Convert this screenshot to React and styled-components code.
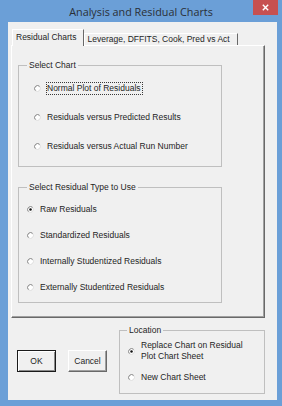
import React from "react";
import styled, { createGlobalStyle } from "styled-components";

const Global = createGlobalStyle`
  html, body { margin: 0; padding: 0; background: #6b9fd7; }
  body { font-family: "Liberation Sans", Arial, sans-serif; }
`;

const Window = styled.div`
  width: 282px;
  height: 406px;
  box-sizing: border-box;
  background: #6b9fd7;
  display: flex;
  flex-direction: column;
`;

const TitleBar = styled.div`
  flex: none;
  height: 22px;
  padding: 0 4px;
  display: grid;
  grid-template-columns: 1fr auto 1fr;
`;

const Title = styled.div`
  grid-column: 2;
  line-height: 23px;
  font-family: "Open Sans", "Noto Sans", sans-serif;
  font-size: 10.8px;
  color: #2a2f36;
  white-space: nowrap;
`;

const CloseButton = styled.div`
  grid-column: 3;
  justify-self: end;
  align-self: start;
  width: 25px;
  height: 15px;
  background: #c75050;
  display: flex;
  align-items: center;
  justify-content: center;
`;

const Client = styled.div`
  flex: 1;
  margin: 0 5px 6px 8px;
  padding: 7px 12px 0 3px;
  background: #f0f0f0;
  display: flex;
  flex-direction: column;
  font-family: "Liberation Sans", Arial, sans-serif;
  font-size: 8.5px;
  color: #1e1e1e;
`;

const TabStrip = styled.div`
  display: flex;
  align-items: flex-end;
  padding-left: 1px;
  position: relative;
  z-index: 1;
`;

const Tab = styled.div`
  box-sizing: border-box;
  height: ${(p) => (p.$active ? 17 : 12)}px;
  margin-bottom: ${(p) => (p.$active ? -1 : 0)}px;
  padding: 0 7px ${(p) => (p.$active ? 1 : 0)}px ${(p) => (p.$active ? 3 : 2)}px;
  display: flex;
  align-items: center;
  line-height: 11px;
  white-space: nowrap;
  background: #f0f0f0;
  border-top: 1px solid #ffffff;
  border-left: 1px solid #ffffff;
  border-right: 1px solid #696969;
`;

const TabPanel = styled.div`
  box-sizing: border-box;
  height: 273px;
  border: 1px solid;
  border-color: #ffffff #696969 #696969 #ffffff;
  box-shadow: inset -1px -1px 0 #a0a0a0;
  padding: 14px 0 0 6px;
  display: flex;
  flex-direction: column;
  gap: 15px;
`;

const GroupBox = styled.fieldset`
  margin: 0;
  padding: 0;
  min-width: 0;
  box-sizing: border-box;
  border: 1px solid #bfbfbf;
  width: ${(p) => p.$width || "auto"};
  flex: ${(p) => (p.$grow ? 1 : "none")};
`;

const Legend = styled.legend`
  padding: 0 2px;
  margin-left: ${(p) => p.$offset}px;
  line-height: 10px;
`;

const Options = styled.div`
  display: flex;
  flex-direction: column;
  padding: ${(p) => p.$pad};
  gap: ${(p) => p.$gap}px;
`;

const Option = styled.label`
  display: flex;
  align-items: center;
  gap: 5px;
`;

const OptionText = styled.span`
  line-height: 11px;
  padding: 1px 2px 1px 1px;
  max-width: ${(p) => p.$maxWidth || "none"};
  outline: ${(p) => (p.$focused ? "1px dotted #3a3a3a" : "none")};
  outline-offset: -1px;
`;

const BottomRow = styled.div`
  display: flex;
  align-items: flex-start;
  padding: 7px 0 0 6px;
  gap: 12px;
`;

const Buttons = styled.div`
  display: flex;
  gap: 12px;
  margin-top: 25px;
`;

const Button = styled.button`
  width: 39px;
  height: 22px;
  box-sizing: border-box;
  padding: 0;
  font: inherit;
  color: inherit;
  background: #f0f0f0;
  border: 1px solid;
  border-color: ${(p) =>
    p.$default ? "#1a1a1a" : "#ffffff #696969 #696969 #ffffff"};
  box-shadow: ${(p) =>
    p.$default
      ? "inset 1px 1px 0 #ffffff, inset -1px -1px 0 #8a8a8a"
      : "inset -1px -1px 0 #a0a0a0"};
`;

const RadioMark = ({ checked }) => (
  <svg width="7" height="7" viewBox="0 0 7 7" style={{ flex: "none" }}>
    <circle cx="3.5" cy="3.5" r="3" fill="#ffffff" />
    <path d="M5.62 1.38 A3 3 0 0 1 1.38 5.62" fill="none" stroke="#dcdcdc" strokeWidth="1" />
    <path d="M1.38 5.62 A3 3 0 0 1 5.62 1.38" fill="none" stroke="#7c7c7c" strokeWidth="1" />
    {checked && <circle cx="3.5" cy="3.5" r="1.25" fill="#111111" />}
  </svg>
);

const Radio = ({ checked, focused, maxWidth, children }) => (
  <Option>
    <RadioMark checked={checked} />
    <OptionText $focused={focused} $maxWidth={maxWidth}>
      {children}
    </OptionText>
  </Option>
);

export default function App() {
  return (
    <>
      <Global />
      <Window>
        <TitleBar>
          <Title>Analysis and Residual Charts</Title>
          <CloseButton>
            <svg width="7" height="7" viewBox="0 0 7 7">
              <path d="M0.8 0.8 L6.2 6.2 M6.2 0.8 L0.8 6.2" stroke="#ffffff" strokeWidth="1.4" />
            </svg>
          </CloseButton>
        </TitleBar>
        <Client>
          <TabStrip>
            <Tab $active>Residual Charts</Tab>
            <Tab>Leverage, DFFITS, Cook, Pred vs Act</Tab>
          </TabStrip>
          <TabPanel>
            <GroupBox $width="204px">
              <Legend $offset={8}>Select Chart</Legend>
              <Options $pad="12px 0 13px 15px" $gap={16}>
                <Radio focused>Normal Plot of Residuals</Radio>
                <Radio>Residuals versus Predicted Results</Radio>
                <Radio>Residuals versus Actual Run Number</Radio>
              </Options>
            </GroupBox>
            <GroupBox $width="204px">
              <Legend $offset={8}>Select Residual Type to Use</Legend>
              <Options $pad="11px 0 8px 8px" $gap={13}>
                <Radio checked>Raw Residuals</Radio>
                <Radio>Standardized Residuals</Radio>
                <Radio>Internally Studentized Residuals</Radio>
                <Radio>Externally Studentized Residuals</Radio>
              </Options>
            </GroupBox>
          </TabPanel>
          <BottomRow>
            <Buttons>
              <Button $default>OK</Button>
              <Button>Cancel</Button>
            </Buttons>
            <GroupBox $grow>
              <Legend $offset={7}>Location</Legend>
              <Options $pad="4px 0 9px 8px" $gap={8}>
                <Radio checked maxWidth="108px">
                  Replace Chart on Residual Plot Chart Sheet
                </Radio>
                <Radio>New Chart Sheet</Radio>
              </Options>
            </GroupBox>
          </BottomRow>
        </Client>
      </Window>
    </>
  );
}
